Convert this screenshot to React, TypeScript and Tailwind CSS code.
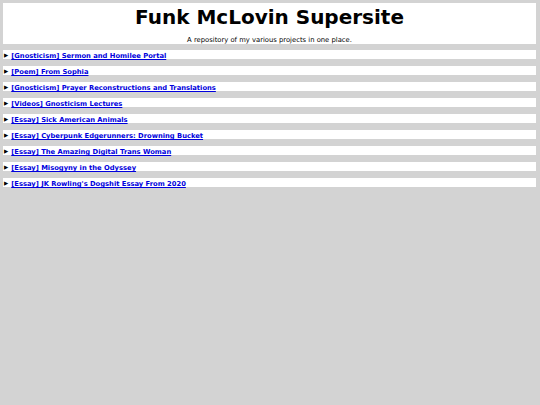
const projects = [
  "[Gnosticism] Sermon and Homilee Portal",
  "[Poem] From Sophia",
  "[Gnosticism] Prayer Reconstructions and Translations",
  "[Videos] Gnosticism Lectures",
  "[Essay] Sick American Animals",
  "[Essay] Cyberpunk Edgerunners: Drowning Bucket",
  "[Essay] The Amazing Digital Trans Woman",
  "[Essay] Misogyny in the Odyssey",
  "[Essay] JK Rowling's Dogshit Essay From 2020",
];

export default function App() {
  return (
    <div className="min-h-screen bg-[#d3d3d3] pt-[3px] font-['DejaVu_Sans',sans-serif] text-black">
      <header className="ml-[3px] mr-[4px] h-[41px] bg-white text-center">
        <h1 className="pt-[2px] text-[20px] font-bold leading-[24px]">Funk McLovin Supersite</h1>
        <p className="mt-[7px] text-[6.8px] leading-[8px]">A repository of my various projects in one place.</p>
      </header>
      <ul className="ml-[3px] mr-[4px] mt-[6px] flex flex-col gap-[7px]">
        {projects.map((p) => (
          <li key={p} className="flex h-[9px] items-end bg-white text-[6.75px] font-bold leading-[5px]">
            <span className="mb-[1px] ml-[1px] mr-[3px] text-[5.5px] leading-none">▶</span>
            <a href="#" className="text-[#0000dd] underline">
              {p}
            </a>
          </li>
        ))}
      </ul>
    </div>
  );
}
